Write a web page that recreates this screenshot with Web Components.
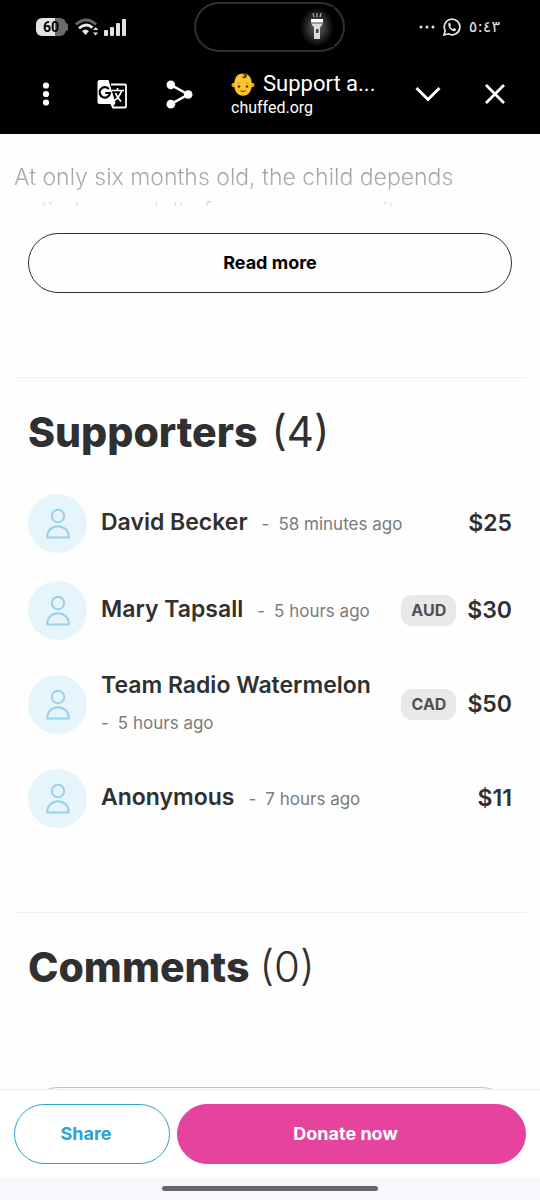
<!DOCTYPE html>
<html lang="en">
<head>
<meta charset="utf-8">
<meta name="viewport" content="width=device-width, initial-scale=1">
<title>Support a child – chuffed.org</title>
<style>
  body { margin: 0; font-family: Inter, "Open Sans", sans-serif; color: #303031; background: #fefefe; }
</style>
</head>
<body>
<campaign-app></campaign-app>
<script>
function define(name, html, setup) {
  const template = document.createElement('template');
  template.innerHTML = html;
  customElements.define(name, class extends HTMLElement {
    constructor() {
      super();
      this.attachShadow({ mode: 'open' }).append(template.content.cloneNode(true));
    }
    connectedCallback() { if (setup) setup(this, this.shadowRoot); }
  });
}

define('status-bar', `
  <style>
    :host { display: grid; grid-template-columns: 1fr 151px 1fr; align-items: center; height: 54px; padding: 0 38px 0 36px; color: #e4e4e4; }
    svg { display: block; }
    .left, .right { display: flex; align-items: center; }
    .left { gap: 6px; }
    .right { justify-content: flex-end; gap: 8px; padding-right: 2px; }
    .battery { display: flex; align-items: center; }
    .level { width: 30px; height: 18px; border-radius: 6px; background: linear-gradient(90deg, #e4e4e4 63%, #6b6b6b 63%); color: #000; font: 700 14px/18px Roboto, sans-serif; text-align: center; }
    .tip { width: 2px; height: 8px; border-radius: 0 2px 2px 0; background: #6b6b6b; }
    .island { display: flex; align-items: center; justify-content: flex-end; box-sizing: border-box; height: 50px; padding-right: 9px; border: 2px solid #303030; border-radius: 25px; }
    .glow { display: grid; place-items: center; width: 34px; height: 40px; background: radial-gradient(closest-side, #666, #333 50%, #000); }
    time { font: 16px/20px "DejaVu Sans", sans-serif; }
  </style>
  <div class="left">
    <span class="battery"><span class="level">60</span><span class="tip"></span></span>
    <svg width="24" height="19" viewBox="0 0 24 19" fill="none">
      <path d="M2 6.5Q12-2.5 22 6.5" stroke="#666" stroke-width="3"/>
      <path d="M5 10.2Q12 4 18.5 9.6" stroke="#e8e8e8" stroke-width="2.8"/>
      <path d="M8 13Q11.5 10 15 13L11.5 17Z" fill="#e8e8e8"/>
      <path d="M19 12l2.800-3 2.400 3ZM19 14.500h5l-2.400 3Z" fill="#e8e8e8"/>
    </svg>
    <svg width="23" height="19" viewBox="0 0 23 19" fill="#e4e4e4">
      <rect x="0" y="12" width="4" height="6" rx="1"/><rect x="6" y="9" width="4" height="9" rx="1"/>
      <rect x="12" y="5" width="4" height="13" rx="1"/><rect x="18" y="1" width="4" height="17" rx="1"/>
    </svg>
  </div>
  <div class="island"><span class="glow">
    <svg width="14" height="28" viewBox="0 0 14 28">
      <path d="M3 0l.8 4M7 0v4M11 0l-.8 4" stroke="#aaa" stroke-width="1.2"/>
      <path d="M1 6h12v3.500H1Z" fill="#fff"/><path d="M1 10.500h12l-3 4V26H4V14.500Z" fill="#ddd"/><rect x="6" y="16" width="2.500" height="4" fill="#444"/>
    </svg></span></div>
  <div class="right">
    <svg width="16" height="4" viewBox="0 0 16 4" fill="#e4e4e4"><circle cx="2" cy="2" r="1.500"/><circle cx="8" cy="2" r="1.500"/><circle cx="14" cy="2" r="1.500"/></svg>
    <svg width="18" height="18" viewBox="0 0 18 18" fill="none" stroke="#e4e4e4" stroke-width="1.700">
      <path d="M1 17l1.200-4.300A7.800 7.800 0 1 1 5.300 15.800Z"/>
      <path d="M5.300 5.500C6 4.600 7 4.600 7.300 5.500L8 7.200 7.200 8.500Q8.200 10.300 9.900 11L11.200 10 13 10.900Q13.500 12.700 11.200 13.300C8.500 13.200 5 9.500 5.300 5.500Z" fill="#e4e4e4" stroke="none"/>
    </svg>
    <time>٥:٤٣</time>
  </div>`);

define('browser-bar', `
  <style>
    :host { display: flex; align-items: center; height: 80px; padding: 0 12px; color: #fff; font-family: Roboto, sans-serif; }
    button { display: grid; place-items: center; flex: none; width: 67px; height: 67px; padding: 0; border: 0; background: none; color: inherit; }
    svg { display: block; }
    .page { flex: 1; min-width: 0; padding-left: 18px; }
    .title { display: flex; align-items: center; gap: 8px; font-size: 22px; line-height: 27px; white-space: nowrap; }
    .host { font-size: 16px; line-height: 21px; }
  </style>
  <button aria-label="Menu"><svg width="8" height="24" viewBox="0 0 8 24" fill="#fff"><circle cx="4" cy="3.500" r="3.100"/><circle cx="4" cy="12" r="3.100"/><circle cx="4" cy="20.500" r="3.100"/></svg></button>
  <button aria-label="Translate"><svg width="32" height="30" viewBox="0 0 32 30" fill="none">
    <path d="M14 5.500H28Q29 5.500 29 6.500V27.500Q29 28.500 28 28.500H16L14 24" stroke="#fff" stroke-width="1.800"/>
    <path d="M2.500 1H11.500L18.500 24 15.500 28.500 14 25H2.500Q.5 25 .5 23V3Q.5 1 2.500 1Z" fill="#fff"/>
    <path d="M11.800 10A5.200 5.200 0 1 0 13 14H8.300" stroke="#000" stroke-width="2.200"/>
    <path d="M15 11.500H27M20.500 9V11.500M24.500 12Q22 19 16.500 22M18.500 14Q20.500 19 24 22.500" stroke="#fff" stroke-width="1.700"/>
  </svg></button>
  <button aria-label="Share page"><svg width="27" height="29" viewBox="0 0 28 30" fill="#fff"><path d="M5 5L23 15 5 25" fill="none" stroke="#fff" stroke-width="2.600"/><circle cx="5" cy="5" r="4.500"/><circle cx="23" cy="15" r="4.500"/><circle cx="5" cy="25" r="4.500"/></svg></button>
  <div class="page">
    <div class="title"><svg role="img" aria-label="Baby" width="24" height="24" viewBox="0 0 24 24">
      <circle cx="2.800" cy="13" r="2.300" fill="#eda600"/><circle cx="21.200" cy="13" r="2.300" fill="#eda600"/>
      <path d="M12 1.500C18 1.500 20.800 6 20.800 12.500S17.500 23.800 12 23.800 3.200 19 3.200 12.500 6 1.500 12 1.500Z" fill="#fcc52c"/>
      <path d="M9.500 1.800Q15 0 16 3.300Q16 6.300 13 6.300Q10.500 5.800 11.600 4.200Q13.700 5.200 13.400 3.400Q12.500 2 9.500 1.800Z" fill="#533b32"/>
      <circle cx="8" cy="14.500" r="1.300" fill="#49362c"/><circle cx="16" cy="14.500" r="1.300" fill="#49362c"/>
      <path d="M6.500 11.500Q8 10.500 9.200 11.200M14.800 11.200Q16 10.500 17.500 11.500" stroke="#d79000" stroke-width=".8" fill="none"/>
      <path d="M9.500 18.500Q12 20.500 14.500 18.500" stroke="#7a4a20" stroke-width="1.300" fill="none"/>
    </svg><span>Support a...</span></div>
    <div class="host">chuffed.org</div>
  </div>
  <button aria-label="Minimise"><svg width="26" height="16" viewBox="0 0 26 16" fill="none" stroke="#fff" stroke-width="3"><path d="M1.500 2L13 13.500 24.500 2"/></svg></button>
  <button aria-label="Close"><svg width="20" height="20" viewBox="0 0 20 20" stroke="#fff" stroke-width="2.800"><path d="M1 1L19 19M19 1L1 19"/></svg></button>`);

define('pill-button', `
  <style>
    :host { display: block; }
    button { display: block; box-sizing: border-box; width: 100%; height: 60px; padding: 0 var(--pad-end, 16px) 0 16px; border: 1px solid var(--edge, #303031); border-radius: 30px; background: var(--fill, transparent); color: var(--ink, #000); font: 700 18px/24px Inter, sans-serif; }
  </style>
  <button><slot></slot></button>`, (host, root) => {
    const label = host.getAttribute('label');
    if (label) root.querySelector('button').setAttribute('aria-label', label);
  });

define('story-excerpt', `
  <style>
    :host { display: block; padding: 26px 14px 0; }
    /* The second line fades away just below the tops of its letters. */
    p { margin: 0; font-size: 23px; line-height: 34px; font-weight: 300; --fade: linear-gradient(rgba(0,0,0,.5), rgba(0,0,0,.36) 28px, rgba(0,0,0,.15) 45px, transparent 46px); -webkit-mask-image: var(--fade); mask-image: var(--fade); }
    pill-button { margin: 5px 14px 0; }
  </style>
  <p>At only six months old, the child depends entirely on adults for every necessity.</p>
  <pill-button>Read more</pill-button>`);

define('page-section', `
  <style>
    :host { display: block; margin: 84px 14px 0; padding: 24px 14px 0; border-top: 1px solid #efefef; }
    h2 { display: flex; align-items: center; gap: var(--title-gap, 10px); margin: 0; font-size: 41px; line-height: 60px; font-weight: 800; }
    .count { font-size: 42px; font-weight: var(--count-weight, 300); }
  </style>
  <h2><span class="name"></span><span class="count"></span></h2>
  <slot></slot>`, (host, root) => {
    root.querySelector('.name').textContent = host.getAttribute('name');
    root.querySelector('.count').textContent = '(' + host.getAttribute('count') + ')';
  });

define('supporter-row', `
  <style>
    :host { display: flex; align-items: center; }
    .avatar { display: grid; place-items: center; flex: none; width: 59px; height: 59px; border-radius: 50%; background: #e6f4fb; }
    .who { flex: 1; min-width: 0; display: flex; flex-wrap: wrap; align-items: baseline; gap: 3px 14px; margin-left: 14px; line-height: 35px; }
    .name { font-size: 23px; font-weight: 600; }
    .when { display: flex; gap: 9px; font-size: 17px; color: #7b7b7b; }
    .currency { margin-right: 11px; padding: 0 10px; border-radius: 11px; background: #e8e8e8; color: #505050; font-size: 16px; line-height: 31px; font-weight: 700; }
    .currency:empty { display: none; }
    .amount { font-size: 23px; line-height: 35px; font-weight: 600; }
  </style>
  <span class="avatar"><svg width="24" height="32" viewBox="0 0 24 32" fill="none" stroke="#97d0ea" stroke-width="2"><circle cx="12" cy="8" r="6.200"/><path d="M1.200 29.500C1.200 14.500 22.800 14.500 22.800 29.500Z" stroke-linejoin="round"/></svg></span>
  <div class="who"><span class="name"><slot></slot></span><span class="when"><span>-</span><span class="ago"></span></span></div>
  <span class="currency"></span><span class="amount"></span>`, (host, root) => {
    for (const key of ['ago', 'currency', 'amount'])
      root.querySelector('.' + key).textContent = host.getAttribute(key) || '';
  });

define('supporter-list', `
  <style>:host { display: grid; gap: 28px; margin-top: 32px; }</style><slot></slot>`);

define('action-bar', `
  <style>
    :host { display: flex; gap: 7px; padding: 14px 14px 13px; border-top: 1px solid #ececec; background: #fff; --pad-end: 28px; }
    .share { flex: 156; --edge: #30a3c9; --ink: #2ba3d4; }
    .donate { flex: 349; --edge: #e6439f; --fill: #e6439f; --ink: #fff; }
  </style>
  <pill-button class="share">Share</pill-button><pill-button class="donate">Donate now</pill-button>`);

define('gesture-bar', `
  <style>
    :host { display: grid; place-items: center; height: 23px; background: #f8f7fd; }
    span { width: 40%; height: 5px; border-radius: 3px; background: #666; }
  </style><span></span>`);

define('campaign-app', `
  <style>
    :host { display: flex; flex-direction: column; height: 100vh; }
    header { flex: none; background: #000; }
    main { flex: 1; min-height: 0; overflow-y: auto; scrollbar-width: none; }
    footer { flex: none; }
    .supporters { --title-gap: 14px; --count-weight: 400; }
    .add { margin-top: 90px; --edge: #c9bfc4; }
  </style>
  <header><status-bar></status-bar><browser-bar></browser-bar></header>
  <main>
    <story-excerpt></story-excerpt>
    <page-section class="supporters" name="Supporters" count="4">
      <supporter-list>
        <supporter-row ago="58 minutes ago" amount="$25">David Becker</supporter-row>
        <supporter-row ago="5 hours ago" currency="AUD" amount="$30">Mary Tapsall</supporter-row>
        <supporter-row ago="5 hours ago" currency="CAD" amount="$50">Team Radio Watermelon</supporter-row>
        <supporter-row ago="7 hours ago" amount="$11">Anonymous</supporter-row>
      </supporter-list>
    </page-section>
    <page-section name="Comments" count="0">
      <pill-button class="add" label="Add a comment"></pill-button>
    </page-section>
  </main>
  <footer><action-bar></action-bar><gesture-bar></gesture-bar></footer>`);
</script>
</body>
</html>
